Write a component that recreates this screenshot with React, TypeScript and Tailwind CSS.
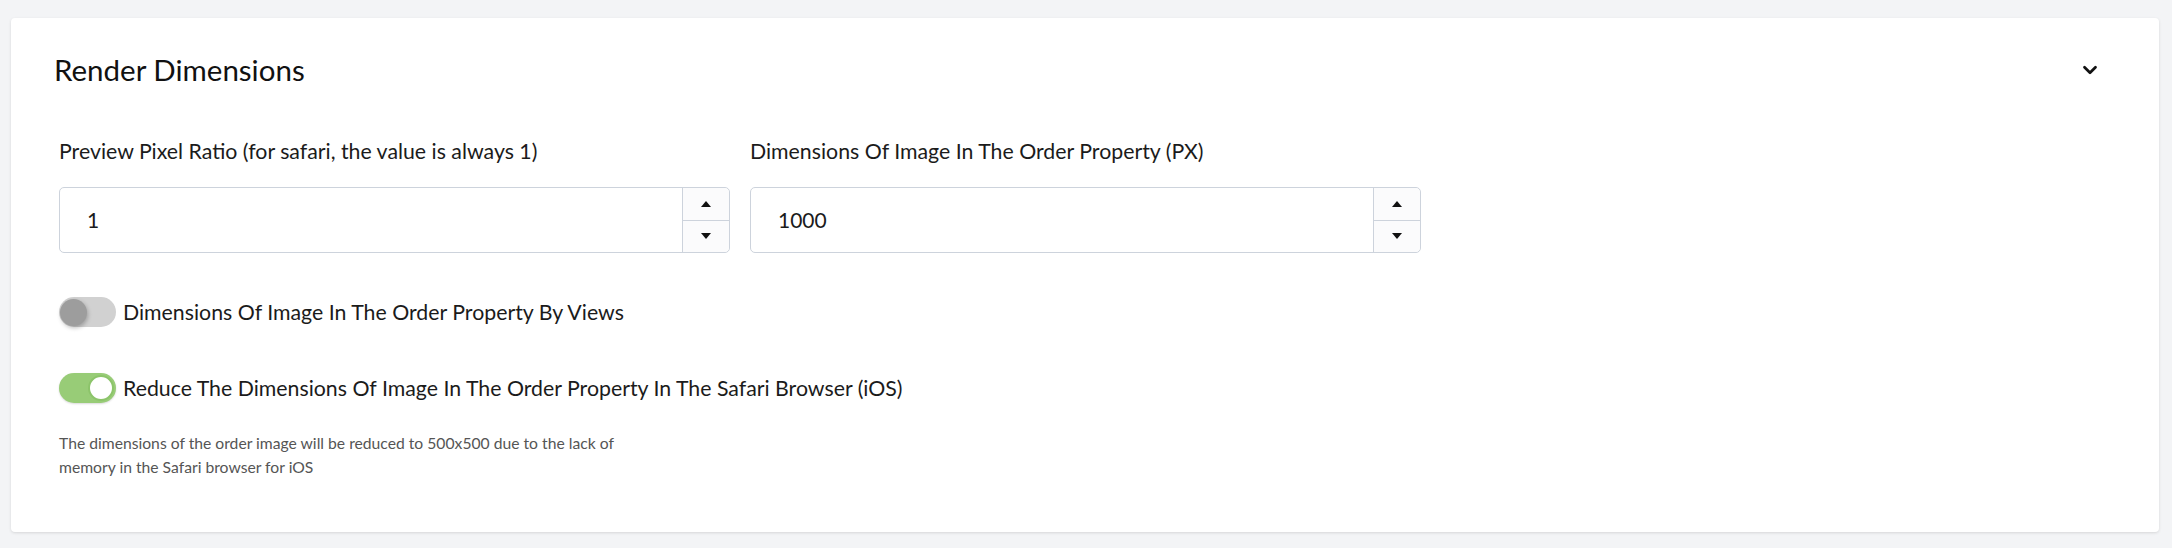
import { ChevronDown } from 'lucide-react';

function NumberField({ label, value }: { label: string; value: string }) {
  return (
    <div className="w-[671px]">
      <label className="block text-[21.3px] leading-[30px] text-[#1b1b1b]">{label}</label>
      <div className="mt-[21px] flex h-[66px] rounded-[5px] border border-[#cdd3dc] bg-white">
        <div className="flex flex-1 items-center pl-[27px] text-[21px] text-[#1b1b1b]">{value}</div>
        <div className="flex w-[47px] flex-col border-l border-[#cdd3dc] bg-[#fbfbfc] rounded-r-[5px]">
          <button className="flex flex-1 items-center justify-center border-b border-[#cdd3dc]">
            <span className="h-0 w-0 border-x-[5px] border-b-[6px] border-x-transparent border-b-[#111]" />
          </button>
          <button className="flex flex-1 items-center justify-center">
            <span className="h-0 w-0 border-x-[5px] border-t-[6px] border-x-transparent border-t-[#111]" />
          </button>
        </div>
      </div>
    </div>
  );
}

function Toggle({ on, label }: { on: boolean; label: string }) {
  return (
    <div className="flex h-[30px] items-center">
      {on ? (
        <div className="flex h-[30px] w-[57px] items-center justify-end rounded-full bg-[#98cc77] px-[2px] shadow-[0_1px_2px_rgba(0,0,0,0.15)]">
          <div className="h-[26px] w-[26px] rounded-full border-[2px] border-[#8cc46a] bg-white" />
        </div>
      ) : (
        <div className="flex h-[30px] w-[57px] items-center rounded-full bg-[#d1d1d1] px-[1px]">
          <div className="h-[27px] w-[27px] rounded-full bg-[#9d9d9d] shadow-[1px_2px_4px_rgba(0,0,0,0.25)]" />
        </div>
      )}
      <span className="ml-[7px] text-[21.3px] leading-[30px] text-[#1b1b1b]">{label}</span>
    </div>
  );
}

export default function App() {
  return (
    <div
      className="min-h-screen bg-[#f3f4f6] pt-[18px] pl-[11px] pr-[13px] pb-[16px]"
      style={{ fontFamily: 'Lato, "Open Sans", sans-serif' }}
    >
      <div className="rounded-[4px] bg-white pb-[53px] shadow-[0_1px_3px_rgba(0,0,0,0.12)]">
        <div className="flex items-center justify-between pt-[35px] pl-[43px] pr-[58px]">
          <h2 className="text-[29.5px] leading-[34px] text-[#111]">Render Dimensions</h2>
          <ChevronDown className="h-[22px] w-[22px] text-[#111]" strokeWidth={3} />
        </div>

        <div className="pl-[48px]">
          <div className="mt-[49px] flex gap-[20px]">
            <NumberField label="Preview Pixel Ratio (for safari, the value is always 1)" value="1" />
            <NumberField label="Dimensions Of Image In The Order Property (PX)" value="1000" />
          </div>

          <div className="mt-[44px]">
            <Toggle on={false} label="Dimensions Of Image In The Order Property By Views" />
          </div>
          <div className="mt-[46px]">
            <Toggle on label="Reduce The Dimensions Of Image In The Order Property In The Safari Browser (iOS)" />
          </div>

          <p className="mt-[28px] max-w-[580px] text-[15.7px] leading-[24px] text-[#555]">
            The dimensions of the order image will be reduced to 500x500 due to the lack of memory in the Safari
            browser for iOS
          </p>
        </div>
      </div>
    </div>
  );
}
